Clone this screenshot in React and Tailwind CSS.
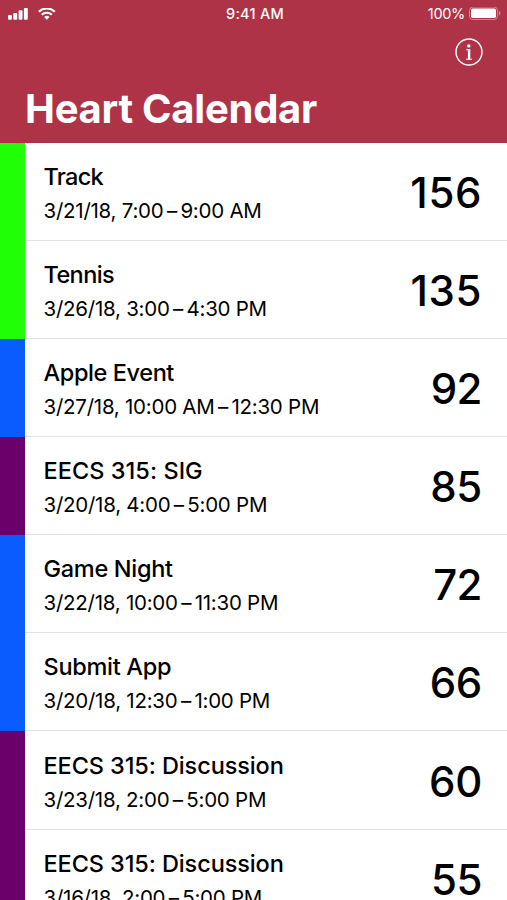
import React from 'react';

// \u2009 = thin space around the dash
const events = [
  { title: 'Track', time: '3/21/18, 7:00\u2009–\u20099:00 AM', bpm: 156, color: 'bg-[#21ff06]', tracking: 'tracking-[-0.7px]', bpmTracking: 'tracking-[0.6px]' },
  { title: 'Tennis', time: '3/26/18, 3:00\u2009–\u20094:30 PM', bpm: 135, color: 'bg-[#21ff06]', tracking: 'tracking-[-0.6px]', bpmTracking: 'tracking-[0.6px]' },
  { title: 'Apple Event', time: '3/27/18, 10:00 AM\u2009–\u200912:30 PM', bpm: 92, color: 'bg-[#0b5cff]', tracking: 'tracking-[-0.4px]', bpmTracking: 'tracking-[-0.5px]' },
  { title: 'EECS 315: SIG', time: '3/20/18, 4:00\u2009–\u20095:00 PM', bpm: 85, color: 'bg-[#6b006b]', tracking: 'tracking-[0.05px]', bpmTracking: 'tracking-[-0.3px]' },
  { title: 'Game Night', time: '3/22/18, 10:00\u2009–\u200911:30 PM', bpm: 72, color: 'bg-[#0b5cff]', tracking: 'tracking-[-0.3px]', bpmTracking: 'tracking-[-0.5px]' },
  { title: 'Submit App', time: '3/20/18, 12:30\u2009–\u20091:00 PM', bpm: 66, color: 'bg-[#0b5cff]', tracking: 'tracking-[-0.3px]', bpmTracking: 'tracking-[-0.3px]' },
  { title: 'EECS 315: Discussion', time: '3/23/18, 2:00\u2009–\u20095:00 PM', bpm: 60, color: 'bg-[#6b006b]', tracking: 'tracking-[-0.1px]', bpmTracking: 'tracking-[-0.3px]' },
  { title: 'EECS 315: Discussion', time: '3/16/18, 2:00\u2009–\u20095:00 PM', bpm: 55, color: 'bg-[#6b006b]', tracking: 'tracking-[-0.1px]', bpmTracking: 'tracking-[-0.5px]' },
];

function StatusBar() {
  return (
    <div className="flex h-7 items-center pl-2 pr-[5px]">
      <div className="flex flex-1 items-center gap-[9.5px]">
        <svg className="h-[13px] w-5" viewBox="0 0 20 13" fill="currentColor">
          <rect x="0" y="7" width="3.9" height="4.7" rx="1" />
          <rect x="5.3" y="5" width="3.9" height="6.7" rx="1" />
          <rect x="10.6" y="2.3" width="3.9" height="9.4" rx="1" />
          <rect x="15.9" y="0" width="3.9" height="11.7" rx="1" />
        </svg>
        <svg className="h-[13px] w-[18px]" viewBox="0 0 18 13" fill="none" stroke="currentColor" strokeWidth="2.1">
          <path d="M.8 3.7a11.4 11.4 0 0 1 16 0M3.7 6.8a7.2 7.2 0 0 1 10.2 0" />
          <path d="M6.1 9a3.9 3.9 0 0 1 5.4 0L8.800 11.7z" fill="currentColor" stroke="none" />
        </svg>
      </div>
      <span className="text-[14.5px] font-medium tracking-[0.25px]">9:41 AM</span>
      <div className="flex flex-1 items-center justify-end gap-[4px]">
        <span className="text-[14.5px] tracking-[-0.3px]">100%</span>
        <svg className="h-[14px] w-[33px]" viewBox="0 0 33 14">
          <rect x="0.5" y="0" width="28" height="12.5" rx="3.5" fill="none" stroke="currentColor" opacity=".4" />
          <rect x="2" y="1.5" width="25" height="9.5" rx="1.8" fill="currentColor" />
          <path d="M30 4.1c1.9.6 1.9 3.7 0 4.3z" fill="currentColor" opacity=".45" />
        </svg>
      </div>
    </div>
  );
}

function InfoIcon() {
  return (
    <svg className="h-7 w-7" viewBox="0 0 28 28" fill="none">
      <circle cx="14" cy="14" r="13" stroke="currentColor" strokeWidth="1.4" />
      <circle cx="13.8" cy="7.9" r="1.7" fill="currentColor" />
      <path d="M11.3 11.6h3.5M11 21.200h6" stroke="currentColor" strokeWidth="1.1" />
      <path d="M14.1 11.1v10.300" stroke="currentColor" strokeWidth="2.4" />
    </svg>
  );
}

function EventRow({ event }) {
  return (
    <li className="flex h-[98.15px]">
      <div className={`w-[25px] shrink-0 ${event.color}`} />
      <div className="flex flex-1 items-center justify-between border-b border-[#e2e2e4] pl-[18.5px] pr-[25px]">
        <div className="pt-[5px]">
          <h2 className={`text-[23.5px] font-medium leading-[34px] ${event.tracking}`}>{event.title}</h2>
          <p className="text-[20.5px] leading-[34px] tracking-[-0.25px]">{event.time}</p>
        </div>
        <span className={`pt-[2px] text-[42px] font-[480] ${event.bpmTracking}`}>{event.bpm}</span>
      </div>
    </li>
  );
}

export default function App() {
  return (
    <div className="h-[900px] w-[507px] overflow-hidden bg-white font-['Inter',sans-serif] text-black">
      <header className="h-[142.6px] bg-[#ae3347] text-white">
        <StatusBar />
        <div className="flex justify-end pr-6 pt-[10px]">
          <InfoIcon />
        </div>
        <h1 className="mt-[13px] pl-[25px] text-[40px] font-bold leading-[60px] tracking-[-0.25px]">Heart Calendar</h1>
      </header>
      <ul>
        {events.map((event, i) => (
          <EventRow key={i} event={event} />
        ))}
      </ul>
    </div>
  );
}
